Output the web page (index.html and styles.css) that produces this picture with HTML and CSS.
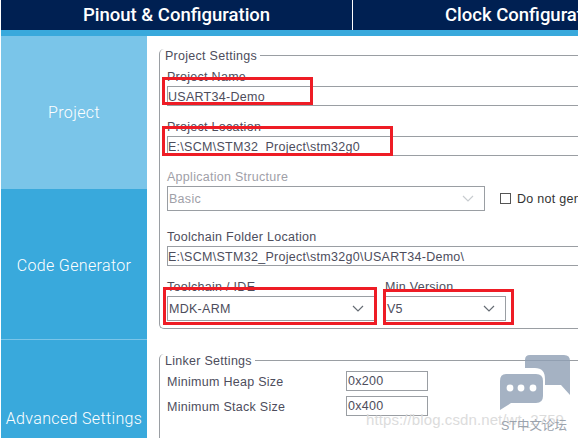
FILE: index.html
```html
<!DOCTYPE html>
<html lang="en">
<head>
<meta charset="utf-8">
<title>Project Manager</title>
<link rel="stylesheet" href="styles.css">
</head>
<body>
<div class="app">
  <header class="tabs">
    <div class="tab tab-pinout">Pinout &amp; Configuration</div>
    <div class="tab tab-clock">Clock Configuration</div>
  </header>
  <div class="strip"></div>
  <div class="main">
    <nav class="side">
      <div class="side-item side-project">Project</div>
      <div class="side-item side-code">Code Generator</div>
      <div class="side-item side-adv">Advanced Settings</div>
    </nav>
    <section class="content">
      <div class="group group-project">
        <div class="legend"><span class="legend-text">Project Settings</span><span class="legend-line"></span></div>
        <div class="label label-first">Project Name</div>
        <div class="input">USART34-Demo</div>
        <div class="label label-gap">Project Location</div>
        <div class="input">E:\SCM\STM32_Project\stm32g0</div>
        <div class="label label-gap disabled-text">Application Structure</div>
        <div class="app-row">
          <div class="select select-basic disabled-text">Basic
            <svg class="chev" width="14" height="8" viewBox="0 0 14 8"><path d="M2 1l5 5 5-5" fill="none" stroke="#c8ccd0" stroke-width="1.2"/></svg>
          </div>
          <div class="check"></div>
          <div class="check-label">Do not generate the main()</div>
        </div>
        <div class="label label-tool">Toolchain Folder Location</div>
        <div class="input">E:\SCM\STM32_Project\stm32g0\USART34-Demo\</div>
        <div class="tool-row">
          <div class="tool-col">
            <div class="label">Toolchain / IDE</div>
            <div class="select select-ide">MDK-ARM
              <svg class="chev" width="14" height="8" viewBox="0 0 14 8"><path d="M2 1l5 5 5-5" fill="none" stroke="#666c74" stroke-width="1.2"/></svg>
            </div>
          </div>
          <div class="tool-col">
            <div class="label">Min Version</div>
            <div class="select select-ver">V5
              <svg class="chev" width="14" height="8" viewBox="0 0 14 8"><path d="M2 1l5 5 5-5" fill="none" stroke="#666c74" stroke-width="1.2"/></svg>
            </div>
          </div>
        </div>
      </div>
      <div class="group group-linker">
        <div class="legend"><span class="legend-text">Linker Settings</span><span class="legend-line"></span></div>
        <div class="linker-row linker-first"><span class="linker-label">Minimum Heap Size</span><div class="linker-input">0x200</div></div>
        <div class="linker-row"><span class="linker-label">Minimum Stack Size</span><div class="linker-input">0x400</div></div>
      </div>
    </section>
  </div>
  <div class="mark mark-1"></div>
  <div class="mark mark-2"></div>
  <div class="mark mark-3"></div>
  <div class="mark mark-4"></div>
  <div class="wm-url">https://blog.csdn.net/wt_2759</div>
  <svg class="wm-icon" width="72" height="56" viewBox="0 0 72 56">
    <path d="M31 0H65Q71 0 71 6V40L62 30H46V24Q46 13 36 13H26V5Q26 0 31 0Z" fill="#8fa0b5"/>
    <path d="M7 19H37Q44 19 44 26V41Q44 48 37 48H12L1 55V26Q1 19 7 19Z" fill="#8fa0b5"/>
    <circle cx="11" cy="33" r="3.4" fill="#fff"/><circle cx="22" cy="33" r="3.4" fill="#fff"/><circle cx="34" cy="33" r="3.4" fill="#fff"/>
  </svg>
  <div class="wm-name">ST中文论坛</div>
</div>
</body>
</html>
```

FILE: styles.css
```css
* { box-sizing: border-box; }
html, body { margin: 0; padding: 0; }
body { width: 578px; height: 438px; overflow: hidden; background: #fff; font-family: "Liberation Sans", Arial, sans-serif; }
.app { position: relative; width: 578px; height: 438px; overflow: hidden; padding-left: 1px; }
.tabs { display: flex; height: 30px; background: #002052; color: #fff; font-family: Roboto, "Liberation Sans", sans-serif; font-size: 18.5px; font-weight: 500; line-height: 30px; white-space: nowrap; }
.tab { flex: none; }
.tab-pinout { width: 352px; padding-left: 82px; border-right: 1px solid #fff; }
.tab-clock { padding-left: 92px; }
.strip { height: 6px; background: #39a9dc; }
.main { display: flex; height: 402px; }
.side { width: 146px; flex: none; color: #fff; font-family: Roboto, "Liberation Sans", sans-serif; font-size: 16px; font-weight: 300; text-align: center; letter-spacing: .35px; }
.side-item { display: flex; justify-content: center; }
.side-project { height: 153px; background: #7ac5e9; padding-top: 67px; }
.side-code { height: 151px; background: #39a9dc; padding-top: 67px; border-bottom: 1px solid #7ac5e9; }
.side-adv { height: 98px; background: #39a9dc; padding-top: 69px; }
.content { flex: 1; min-width: 0; padding-left: 12px; padding-top: 13px; color: #4d4d5c; font-size: 12.5px; letter-spacing: .28px; white-space: nowrap; }
.group { border-left: 1px solid #9a9ea3; border-bottom: 1px solid #9a9ea3; border-top-left-radius: 5px; border-bottom-left-radius: 5px; padding-left: 7px; width: 460px; }
.group-project { height: 280px; }
.group-linker { margin-top: 25px; height: 90px; border-bottom: 0; }
.legend { display: flex; align-items: center; height: 13px; margin-left: -2px; }
.legend-text { padding-right: 3px; }
.legend-line { flex: 1; height: 1px; background: #9a9ea3; }
.label { height: 14px; line-height: 16px; }
.label-first { margin-top: 7px; }
.label-gap { margin-top: 13px; }
.label-tool { margin-top: 18px; }
.input { height: 20px; margin-top: 3px; border: 1px solid #9a9ea3; border-right: 0; line-height: 20px; }
.disabled-text { color: #a0a0a8; }
.app-row { display: flex; align-items: center; margin-top: 3px; height: 25px; }
.select { position: relative; height: 25px; margin-top: 3px; border: 1px solid #9a9ea3; padding-left: 1px; line-height: 25px; }
.select-basic { flex: none; width: 318px; margin-top: 0; }
.select-ide { width: 208px; }
.select-ver { width: 121px; }
.chev { position: absolute; right: 9px; top: 8px; }
.check { flex: none; width: 11px; height: 11px; margin-left: 15px; border: 1px solid #555; }
.check-label { margin-left: 6px; color: #333; }
.tool-row { display: flex; gap: 10px; margin-top: 13px; }
.linker-row { display: flex; align-items: center; height: 20px; margin-bottom: 5px; }
.linker-first { margin-top: 4px; }
.linker-label { width: 179px; padding-top: 2px; }
.linker-input { width: 82px; height: 20px; border: 1px solid #9a9ea3; padding-left: 1px; line-height: 18px; }
.mark { position: absolute; border: 3px solid #ee1c25; }
.mark-1 { left: 162px; top: 77px; width: 151px; height: 28px; }
.mark-2 { left: 162px; top: 126px; width: 231px; height: 30px; }
.mark-3 { left: 163px; top: 287px; width: 214px; height: 38px; }
.mark-4 { left: 383px; top: 289px; width: 131px; height: 36px; }
.wm-icon { position: absolute; left: 499px; top: 355px; opacity: .8; }
.wm-url { position: absolute; left: 366px; top: 411px; font-size: 15px; color: #dcdcdc; letter-spacing: .1px; white-space: nowrap; }
.wm-name { position: absolute; left: 501px; top: 415px; font-size: 12.5px; color: #9ba3ad; font-family: "Liberation Sans", "Noto Sans CJK SC", sans-serif; white-space: nowrap; }
```
